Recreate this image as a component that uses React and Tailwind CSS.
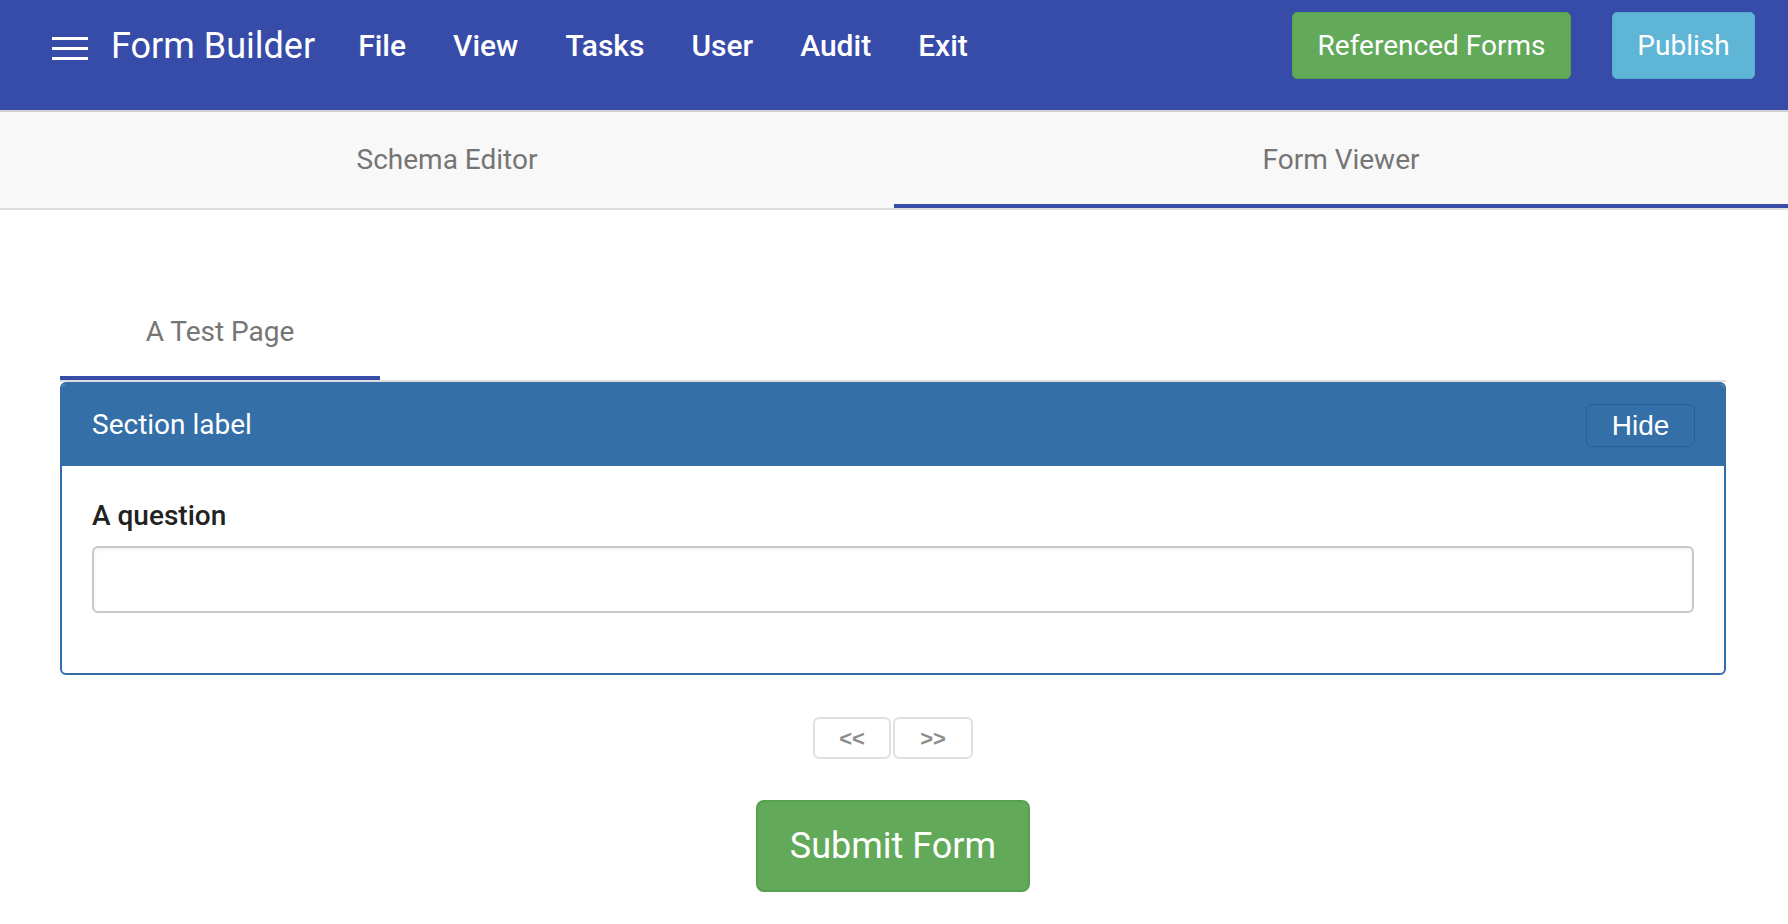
import { useState } from 'react';

const navItems = ['File', 'View', 'Tasks', 'User', 'Audit', 'Exit'];

const Header = () => (
    <header className="h-[112px] bg-[#374ba8] border-b-2 border-[#d0d0d0] flex items-start pt-[12px] pl-[52px] pr-[33px] text-white">
        <div className="h-[67px] flex items-center">
            <svg width="36" height="24" viewBox="0 0 36 24" className="mt-[7px]">
                <rect x="0" y="0" width="36" height="3" fill="white" />
                <rect x="0" y="10" width="36" height="3" fill="white" />
                <rect x="0" y="20" width="36" height="3" fill="white" />
            </svg>
            <span className="ml-[23px] text-[36px] leading-none">Form Builder</span>
            <nav className="ml-[43px] flex items-center gap-[47px]">
                {navItems.map((item) => (
                    <span key={item} className="text-[30px] font-medium leading-none">{item}</span>
                ))}
            </nav>
        </div>
        <div className="ml-auto h-[67px] flex items-center gap-[41px]">
            <button className="h-[67px] w-[279px] rounded-[5px] bg-[#62a95a] border border-[#57a04f] text-[28px] text-white">
                Referenced Forms
            </button>
            <button className="h-[67px] w-[143px] rounded-[5px] bg-[#5fb5d6] border border-[#53accf] text-[28px] text-white">
                Publish
            </button>
        </div>
    </header>
);

const App = () => {
    const [tab, setTab] = useState('viewer');

    return (
        <div className="min-h-screen bg-white font-['Roboto',sans-serif]">
            <Header />

            {/* top tabs */}
            <div className="flex bg-[#f8f8f8] border-b-2 border-[#dedede]">
                {[
                    { id: 'schema', label: 'Schema Editor' },
                    { id: 'viewer', label: 'Form Viewer' },
                ].map((t) => (
                    <button
                        key={t.id}
                        onClick={() => setTab(t.id)}
                        className="relative flex-1 h-[96px] flex items-center justify-center text-[28px] text-[#757575]"
                    >
                        {t.label}
                        {tab === t.id && <span className="absolute left-0 right-0 bottom-0 h-[4px] bg-[#374ba8]" />}
                    </button>
                ))}
            </div>

            <div className="pl-[60px] pr-[62px]">
                {/* page tabs */}
                <div className="mt-[74px] h-[98px] border-b-2 border-[#dedede] flex">
                    <div className="relative w-[320px] h-[96px] flex items-center justify-center text-[28px] text-[#757575]">
                        A Test Page
                        <span className="absolute left-0 right-0 bottom-0 h-[4px] bg-[#374ba8]" />
                    </div>
                </div>

                {/* section */}
                <div className="border-2 border-[#336ea8] rounded-[6px] overflow-hidden">
                    <div className="h-[82px] bg-[#346fa8] flex items-center justify-between pl-[30px] pr-[29px]">
                        <span className="text-[28px] text-white">Section label</span>
                        <button className="w-[109px] h-[43px] border border-[#2b5f92] rounded-[6px] text-[28px] text-white font-['Liberation_Sans',sans-serif]">
                            Hide
                        </button>
                    </div>
                    <div className="px-[30px] pt-[31px] pb-[60px]">
                        <label className="block text-[28px] font-medium text-[#222] leading-[38px] mb-[11px]">A question</label>
                        <input
                            type="text"
                            className="block w-full h-[67px] border-2 border-[#c8c8c8] rounded-[6px] shadow-inner outline-none px-3 text-[24px]"
                        />
                    </div>
                </div>

                {/* pager */}
                <div className="mt-[42px] flex justify-center gap-[2px]">
                    <button className="w-[78px] h-[42px] border-2 border-[#e0e0e0] rounded-[6px] text-[22px] font-bold text-[#8c8c8c] font-['Liberation_Sans',sans-serif]">
                        &lt;&lt;
                    </button>
                    <button className="w-[80px] h-[42px] border-2 border-[#e0e0e0] rounded-[6px] text-[22px] font-bold text-[#8c8c8c] font-['Liberation_Sans',sans-serif]">
                        &gt;&gt;
                    </button>
                </div>

                <div className="mt-[41px] flex justify-center">
                    <button className="w-[274px] h-[92px] rounded-[8px] bg-[#62a95a] border-2 border-[#57a04f] text-[36px] text-white">
                        Submit Form
                    </button>
                </div>
            </div>
        </div>
    );
};

export default App;
